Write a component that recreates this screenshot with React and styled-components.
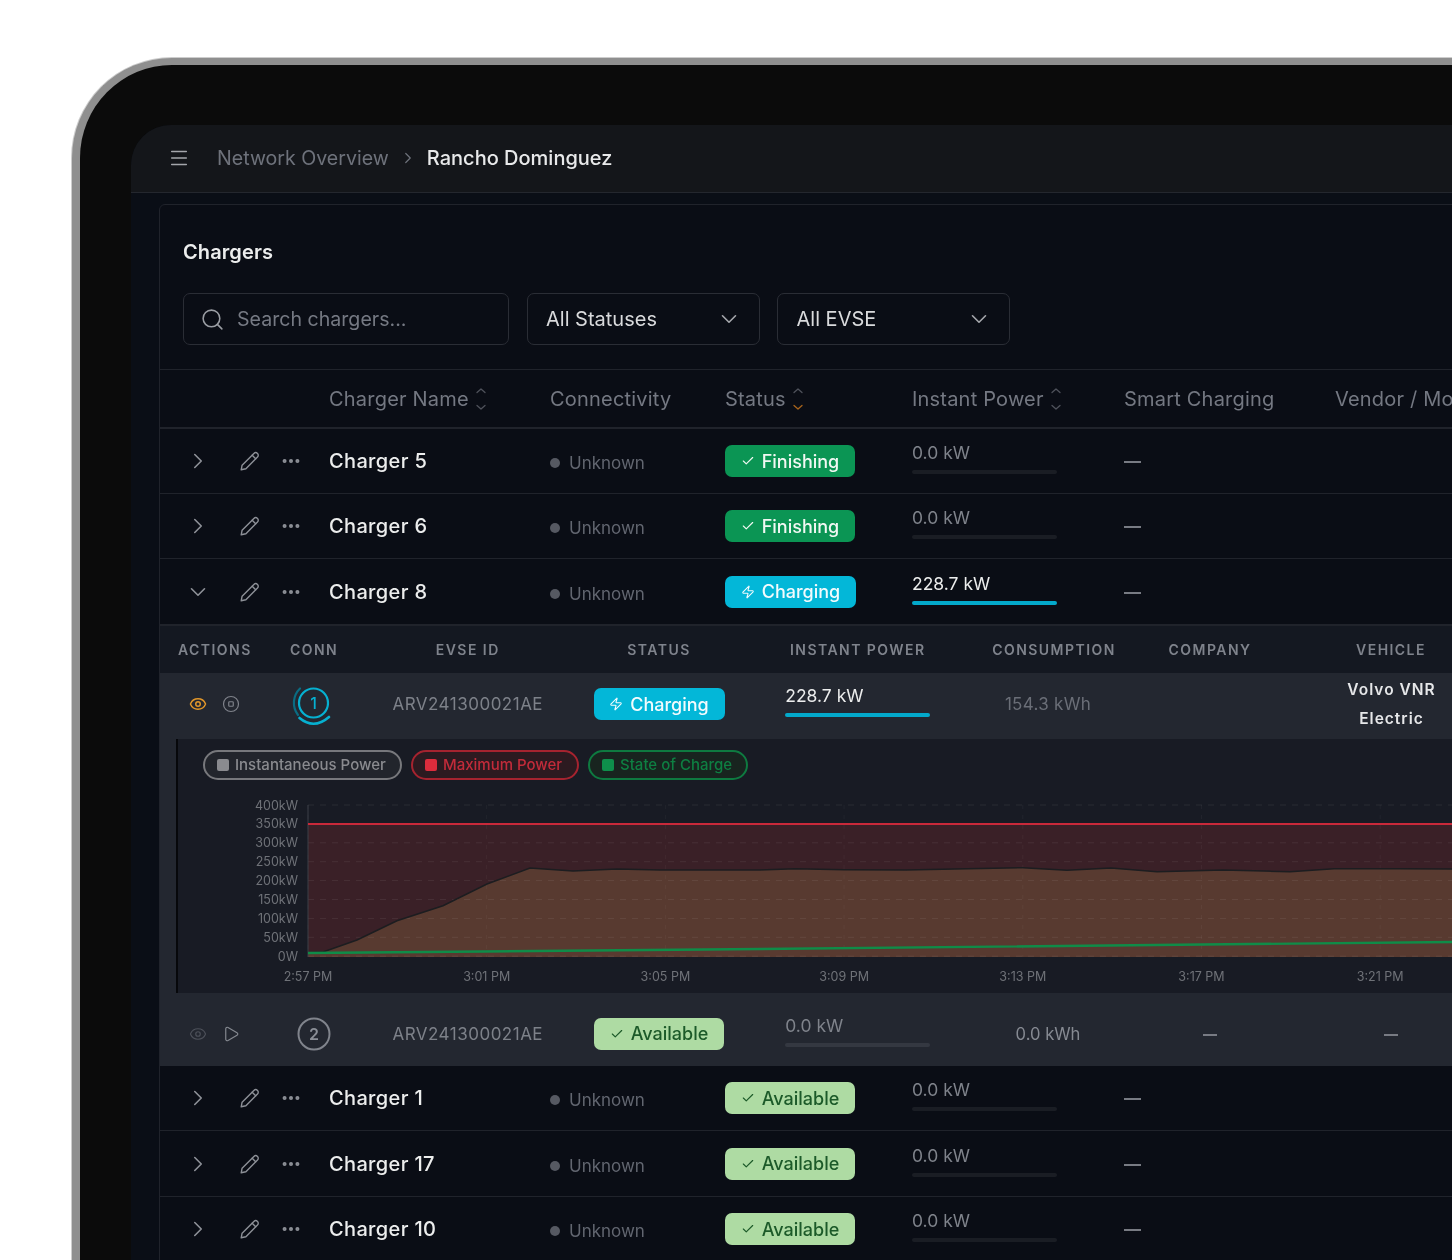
import React from 'react';
import styled, { createGlobalStyle } from 'styled-components';
import { Menu, ChevronRight, ChevronDown, Search, Ellipsis, Check, Zap, Eye, Play, CircleStop } from 'lucide-react';

const Global = createGlobalStyle`
  html, body { margin: 0; padding: 0; background: #fff; }
  body { font-family: Inter, "Noto Sans", sans-serif; -webkit-font-smoothing: antialiased; }
`;

const Page = styled.div`
  width: 1452px; height: 1260px; overflow: hidden; background: #fff;
  padding: 58px 0 0 72px; box-sizing: border-box;
`;
const Bezel = styled.div`
  width: 1600px; height: 1400px; box-sizing: border-box;
  background: #0b0b0b;
  border-style: solid; border-width: 7px 0 0 8px; border-color: #8f8f8f;
  box-shadow: 0 0 0 1px #cdcdcd;
  border-top-left-radius: 100px;
  padding: 60px 0 0 51px;
  filter: blur(0.55px);
`;
const Screen = styled.div`
  height: 1300px; background: #0a0e16; border-top-left-radius: 40px; overflow: hidden;
`;
const TopBar = styled.div`
  height: 68px; box-sizing: border-box; background: #14161a; border-bottom: 1px solid #24272e;
  display: flex; align-items: center; padding: 0 0 2px 37px; font-size: 20px;
  color: #a4a6ab;
`;
const Crumb = styled.span`
  color: ${p => p.$current ? '#e8e9ea' : '#6e727b'};
  font-weight: ${p => p.$current ? 500 : 400};
  font-size: ${p => p.$current ? 20 : 19.6}px;
`;
const CrumbSep = styled.span`
  display: flex; width: 38px; justify-content: center; color: #6e727b;
`;
const MenuSlot = styled.span`
  display: flex; width: 49px; color: #a4a6ab;
`;
const Content = styled.div`
  padding: 11px 0 0 28px;
`;
const Card = styled.div`
  border: 1px solid #20232b; border-top-left-radius: 6px; background: #0a0d15;
`;
const Title = styled.h2`
  margin: 0; padding: 33px 0 27px 23px; font-size: 20px; line-height: 28px; font-weight: 600; color: #eceded; letter-spacing: 0.1px;
`;
const Filters = styled.div`
  display: flex; gap: 17.5px; padding: 0 0 24px 23px;
`;
const Field = styled.div`
  width: ${p => p.$w}px; height: 52px; box-sizing: border-box;
  border: 1px solid #2a2d35; border-radius: 7px; display: flex; align-items: center;
  padding: 0 ${p => p.$pr || 0}px 0 ${p => p.$pl}px; gap: ${p => p.$gap || 0}px; font-size: ${p => p.$muted ? 19.6 : 20}px;
  justify-content: ${p => p.$between ? 'space-between' : 'flex-start'};
  color: ${p => p.$muted ? '#757983' : '#d9dadc'};
`;
const SearchIcon = styled(Search)`
  color: #9a9da3; flex: none;
`;
const SelChevron = styled(ChevronDown)`
  color: #a4a6ab;
`;
const columns = '169px 221px 175px 187px 212px 211px 1fr';
const HeadRow = styled.div`
  display: grid; grid-template-columns: ${columns}; height: 60px; box-sizing: border-box;
  border-top: 1px solid #20232b; border-bottom: 2px solid #20232b; align-items: center;
  font-size: 20px; letter-spacing: 0.2px; color: #747882;
`;
const HeadCell = styled.div`
  display: flex; align-items: center; gap: 6px; white-space: nowrap;
`;
const Row = styled.div`
  display: grid; grid-template-columns: ${columns}; box-sizing: border-box;
  height: ${p => p.$h || 65}px; align-items: center;
  border-bottom: ${p => p.$h === 67 ? 2 : 1}px solid #20232b;
`;
const RowActions = styled.div`
  display: grid; grid-template-columns: 26px 20px 22px; column-gap: 29px;
  padding-left: 25px; align-items: center; justify-items: center; color: #8d9097;
  & > svg:nth-child(3) { margin-left: -19px; }
`;
const Name = styled.div`
  font-size: 20px; font-weight: 500; color: #eceded; letter-spacing: 0.35px;
`;
const Conn = styled.div`
  display: flex; align-items: center; gap: 9px; font-size: 17px; color: #626670; padding-top: 4px;
`;
const Dot = styled.span`
  width: 10px; height: 10px; border-radius: 50%; background: #565962;
`;
const badgeColors = {
  finishing: ['#0b9554', '#f1f8f3'],
  charging: ['#03b7d8', '#f2fbfd'],
  available: ['#aedba3', '#1c5a29'],
};
const Badge = styled.div`
  width: ${p => p.$w || 130}px; height: 32px; border-radius: 7px; box-sizing: border-box;
  display: flex; align-items: center; justify-content: center; gap: 7px;
  font-size: 18px; font-weight: 500; white-space: nowrap;
  background: ${p => badgeColors[p.$kind][0]}; color: ${p => badgeColors[p.$kind][1]};
`;
const Power = styled.div`
  width: 145px; display: flex; flex-direction: column; gap: 5px; margin-top: -7px;
`;
const PowerText = styled.div`
  font-size: 17.5px; line-height: 24px; color: ${p => p.$active ? '#eceded' : '#7f838b'};
`;
const Track = styled.div`
  height: 4px; border-radius: 2px; background: ${p => p.$bg};
  overflow: hidden;
`;
const Fill = styled.div`
  height: 100%; background: #03a9cb;
`;
const Dash = styled.div`
  width: ${p => p.$center ? 14 : 17}px; height: 2px; background: #787b83; margin-top: 2px;
  justify-self: ${p => p.$center ? 'center' : 'start'};
`;

const subColumns = '110px 88px 219.5px 163px 234.5px 158px 154px 208px';
const SubHead = styled.div`
  display: grid; grid-template-columns: ${subColumns}; height: 47px; align-items: center;
  background: #141821; font-size: 14px; letter-spacing: 1.45px; font-weight: 600; color: #7f838c;
`;
const SubHeadCell = styled.div`
  text-align: ${p => p.$left ? 'left' : 'center'}; padding-left: ${p => p.$left ? 18 : 0}px;
`;
const SubRow = styled.div`
  display: grid; grid-template-columns: ${subColumns}; height: ${p => p.$h}px; align-items: center;
  background: #232730; justify-items: center; box-sizing: border-box;
  padding: ${p => p.$pt || 0}px 0 ${p => p.$pb || 0}px;
`;
const SubActions = styled.div`
  justify-self: start; padding-left: 29px; display: flex; gap: 15px; align-items: center;
`;
const Evse = styled.div`
  font-size: 17px; letter-spacing: 0.5px; color: #7d8189;
`;
const Consumption = styled.div`
  font-size: ${p => p.$dim ? 17 : 16.6}px; letter-spacing: ${p => p.$dim ? 0.3 : 0}px; color: ${p => p.$dim ? '#6a6e77' : '#868a92'}; padding-right: 12px;
`;
const Vehicle = styled.div`
  font-size: 15.5px; line-height: 29px; font-weight: 600; letter-spacing: 1px; color: #e6e7e9; text-align: center; margin-left: 1px;
`;
const ChartWrap = styled.div`
  background: #232730; padding-left: 16px;
`;
const ChartPanel = styled.div`
  height: 254px; box-sizing: border-box; background: #181b24; border-left: 2px solid #07080b;
  overflow: hidden;
`;
const Legend = styled.div`
  display: flex; gap: 9px; padding: 11px 0 10px 25px;
`;
const pillColors = {
  gray: ['#77787c', '#22252c', '#8a8b8f', '#8a8b8f'],
  red: ['#a5232f', '#2c1a20', '#c22b3a', '#dd2c3c'],
  green: ['#0e7a40', '#18241f', '#0e7f42', '#0e8f4b'],
};
const Pill = styled.div`
  height: 30px; width: ${p => p.$w}px; box-sizing: border-box; border: 2px solid ${p => pillColors[p.$c][0]};
  border-radius: 15px; background: ${p => pillColors[p.$c][1]}; color: ${p => pillColors[p.$c][2]};
  display: flex; align-items: center; padding: 0 0 2px 12px; gap: 6px; font-size: 15px; font-weight: 500; white-space: nowrap;
`;
const Swatch = styled.span`
  width: 12px; height: 12px; border-radius: 2px; background: ${p => pillColors[p.$c][3]}; flex: none; margin-top: 2px;
`;
const ChartSvg = styled.svg`
  display: block; width: 1274px; height: 203px;
`;
const AxisLabel = styled.text`
  font-family: Inter, sans-serif; font-size: 12.5px; fill: #6f7278;
`;

const PencilIcon = () => (
  <svg width="20" height="20" viewBox="0 0 20 20" fill="none" stroke="#8d9097" strokeWidth="1.4" strokeLinejoin="round" strokeLinecap="round">
    <path d="M1.2 18.8l.9-4.6L13.9 2.4a2.4 2.4 0 0 1 3.6 3.6L5.9 17.8z" />
    <path d="M12.2 4.2l3.5 3.5" />
  </svg>
);
const SortIcon = ({ down }) => (
  <svg width="12" height="24" viewBox="0 0 12 24" fill="none" strokeWidth="1.3" strokeLinecap="round" strokeLinejoin="round">
    <path d="M2 5.5L6 2l4 3.5" stroke="#4f525b" />
    <path d="M2 18.5L6 22l4-3.5" stroke={down || '#4f525b'} />
  </svg>
);
const ConnOne = () => (
  <svg width="44" height="44" viewBox="0 0 44 44" fill="none" strokeLinecap="round">
    <circle cx="21.5" cy="21" r="14.5" stroke="#06b0d0" strokeWidth="2.2" />
    <path d="M8 6.5A20 20 0 0 0 6 33" stroke="#0a6c82" strokeWidth="2.2" />
    <path d="M7.5 36Q22 48 37 35" stroke="#06b0d0" strokeWidth="2.6" />
    <text x="21.5" y="27" textAnchor="middle" fontFamily="Inter, sans-serif" fontSize="16" fontWeight="500" fill="#06b0d0">1</text>
  </svg>
);
const ConnTwo = () => (
  <svg width="36" height="36" viewBox="0 0 36 36" fill="none">
    <circle cx="18" cy="18" r="15.5" stroke="#80848c" strokeWidth="2" />
    <text x="18" y="24" textAnchor="middle" fontFamily="Inter, sans-serif" fontSize="16" fontWeight="600" fill="#8a8e96">2</text>
  </svg>
);

const powerPts = [[308,953],[323,952],[357,940],[397,920.7],[443,905.7],[487,884],[530,868],[573,871],[617,869],[660,870],[760,870],[795,868.7],[844,869.7],[906,870],[967,868.7],[1023,867.7],[1067,870.3],[1111,868],[1157,871.7],[1223,870],[1290,871.7],[1334,868.7],[1400,868.7],[1452,869]];
const ptStr = powerPts.map(p => p.join(',')).join(' ');
const yLabels = ['400kW','350kW','300kW','250kW','200kW','150kW','100kW','50kW','0W'];
const xLabels = ['2:57 PM','3:01 PM','3:05 PM','3:09 PM','3:13 PM','3:17 PM','3:21 PM'];

const Chart = () => (
  <ChartSvg viewBox="178 790 1274 203">
    <rect x="308" y="824" width="1144" height="133" fill="#3a2027" />
    <polygon points={`${ptStr} 1452,957 308,957`} fill="#583a30" />
    {yLabels.map((_, i) => (
      <line key={i} x1="308" x2="1452" y1={805 + i * 18.9} y2={805 + i * 18.9} stroke="#fff" strokeOpacity="0.07" strokeDasharray="6 6" />
    ))}
    {xLabels.map((_, i) => (
      <line key={i} x1={308 + i * 178.7} x2={308 + i * 178.7} y1="805" y2="957" stroke="#fff" strokeOpacity="0.04" strokeDasharray="4 6" />
    ))}
    <line x1="308" x2="308" y1="805" y2="957" stroke="#3b3e46" />
    <polyline points={ptStr} fill="none" stroke="#1c1d20" strokeWidth="1.5" />
    <line x1="308" x2="1452" y1="824" y2="824" stroke="#c9293a" strokeWidth="2.2" />
    <polyline points="308,953 760,949 1452,942" fill="none" stroke="#0f8c48" strokeWidth="2.4" />
    {yLabels.map((t, i) => (
      <AxisLabel key={t} x="298" y={809.5 + i * 18.9} textAnchor="end">{t}</AxisLabel>
    ))}
    {xLabels.map((t, i) => (
      <AxisLabel key={t} x={308 + i * 178.7} y="980.5" textAnchor="middle">{t}</AxisLabel>
    ))}
  </ChartSvg>
);

const StatusBadge = ({ kind, w }) => (
  <Badge $kind={kind} $w={w}>
    {kind === 'charging' ? <Zap size={14} strokeWidth={1.8} /> : <Check size={14} strokeWidth={2} />}
    {kind === 'finishing' ? 'Finishing' : kind === 'charging' ? 'Charging' : 'Available'}
  </Badge>
);
const PowerCell = ({ value, active, sub }) => (
  <Power>
    <PowerText $active={active}>{value}</PowerText>
    <Track $bg={sub ? '#343841' : '#1a1d24'}>{active && <Fill style={{ width: '100%' }} />}</Track>
  </Power>
);
const ChargerRow = ({ name, kind, power, active, open, h }) => (
  <Row $h={h}>
    <RowActions>
      {open ? <ChevronDown size={26} strokeWidth={1.5} /> : <ChevronRight size={26} strokeWidth={1.5} />}
      <PencilIcon />
      <Ellipsis size={22} strokeWidth={2.4} />
    </RowActions>
    <Name>{name}</Name>
    <Conn><Dot />Unknown</Conn>
    <div><StatusBadge kind={kind} w={kind === 'charging' ? 131 : 130} /></div>
    <PowerCell value={power} active={active} />
    <Dash />
    <div />
  </Row>
);

export default function App() {
  return (
    <Page>
      <Global />
      <Bezel>
        <Screen>
          <TopBar>
            <MenuSlot><Menu size={22} strokeWidth={1.6} /></MenuSlot>
            <Crumb>Network Overview</Crumb>
            <CrumbSep><ChevronRight size={18} strokeWidth={1.6} /></CrumbSep>
            <Crumb $current>Rancho Dominguez</Crumb>
          </TopBar>
          <Content>
            <Card>
              <Title>Chargers</Title>
              <Filters>
                <Field $w={326} $pl={16} $gap={12} $muted><SearchIcon size={25} strokeWidth={1.5} />Search chargers...</Field>
                <Field $w={233} $pl={18.5} $pr={17} $between>All Statuses<SelChevron size={26} strokeWidth={1.5} /></Field>
                <Field $w={233} $pl={18.5} $pr={17} $between>All EVSE<SelChevron size={26} strokeWidth={1.5} /></Field>
              </Filters>
              <HeadRow>
                <div />
                <HeadCell>Charger Name<SortIcon /></HeadCell>
                <HeadCell>Connectivity</HeadCell>
                <HeadCell>Status<SortIcon down="#a8641c" /></HeadCell>
                <HeadCell>Instant Power<SortIcon /></HeadCell>
                <HeadCell>Smart Charging</HeadCell>
                <HeadCell>Vendor / Model</HeadCell>
              </HeadRow>
              <ChargerRow name="Charger 5" kind="finishing" power="0.0 kW" />
              <ChargerRow name="Charger 6" kind="finishing" power="0.0 kW" />
              <ChargerRow name="Charger 8" kind="charging" power="228.7 kW" active open h={67} />
              <SubHead>
                <SubHeadCell $left>ACTIONS</SubHeadCell>
                <SubHeadCell>CONN</SubHeadCell>
                <SubHeadCell>EVSE ID</SubHeadCell>
                <SubHeadCell>STATUS</SubHeadCell>
                <SubHeadCell>INSTANT POWER</SubHeadCell>
                <SubHeadCell>CONSUMPTION</SubHeadCell>
                <SubHeadCell>COMPANY</SubHeadCell>
                <SubHeadCell>VEHICLE</SubHeadCell>
              </SubHead>
              <SubRow $h={66} $pb={4}>
                <SubActions>
                  <Eye size={18} color="#e0962a" strokeWidth={2} />
                  <CircleStop size={18} color="#7f828a" strokeWidth={1.6} />
                </SubActions>
                <ConnOne />
                <Evse>ARV241300021AE</Evse>
                <StatusBadge kind="charging" w={131} />
                <PowerCell value="228.7 kW" active sub />
                <Consumption $dim>154.3 kWh</Consumption>
                <div />
                <Vehicle>Volvo VNR<br />Electric</Vehicle>
              </SubRow>
              <ChartWrap>
                <ChartPanel>
                  <Legend>
                    <Pill $c="gray" $w={199}><Swatch $c="gray" />Instantaneous Power</Pill>
                    <Pill $c="red" $w={168}><Swatch $c="red" />Maximum Power</Pill>
                    <Pill $c="green" $w={160}><Swatch $c="green" />State of Charge</Pill>
                  </Legend>
                  <Chart />
                </ChartPanel>
              </ChartWrap>
              <SubRow $h={73} $pt={8}>
                <SubActions>
                  <Eye size={18} color="#4c5059" strokeWidth={1.6} />
                  <Play size={18} color="#84888f" strokeWidth={1.6} />
                </SubActions>
                <ConnTwo />
                <Evse>ARV241300021AE</Evse>
                <StatusBadge kind="available" />
                <PowerCell value="0.0 kW" sub />
                <Consumption>0.0 kWh</Consumption>
                <Dash $center />
                <Dash $center />
              </SubRow>
              <ChargerRow name="Charger 1" kind="available" power="0.0 kW" />
              <ChargerRow name="Charger 17" kind="available" power="0.0 kW" h={66} />
              <ChargerRow name="Charger 10" kind="available" power="0.0 kW" />
            </Card>
          </Content>
        </Screen>
      </Bezel>
    </Page>
  );
}
